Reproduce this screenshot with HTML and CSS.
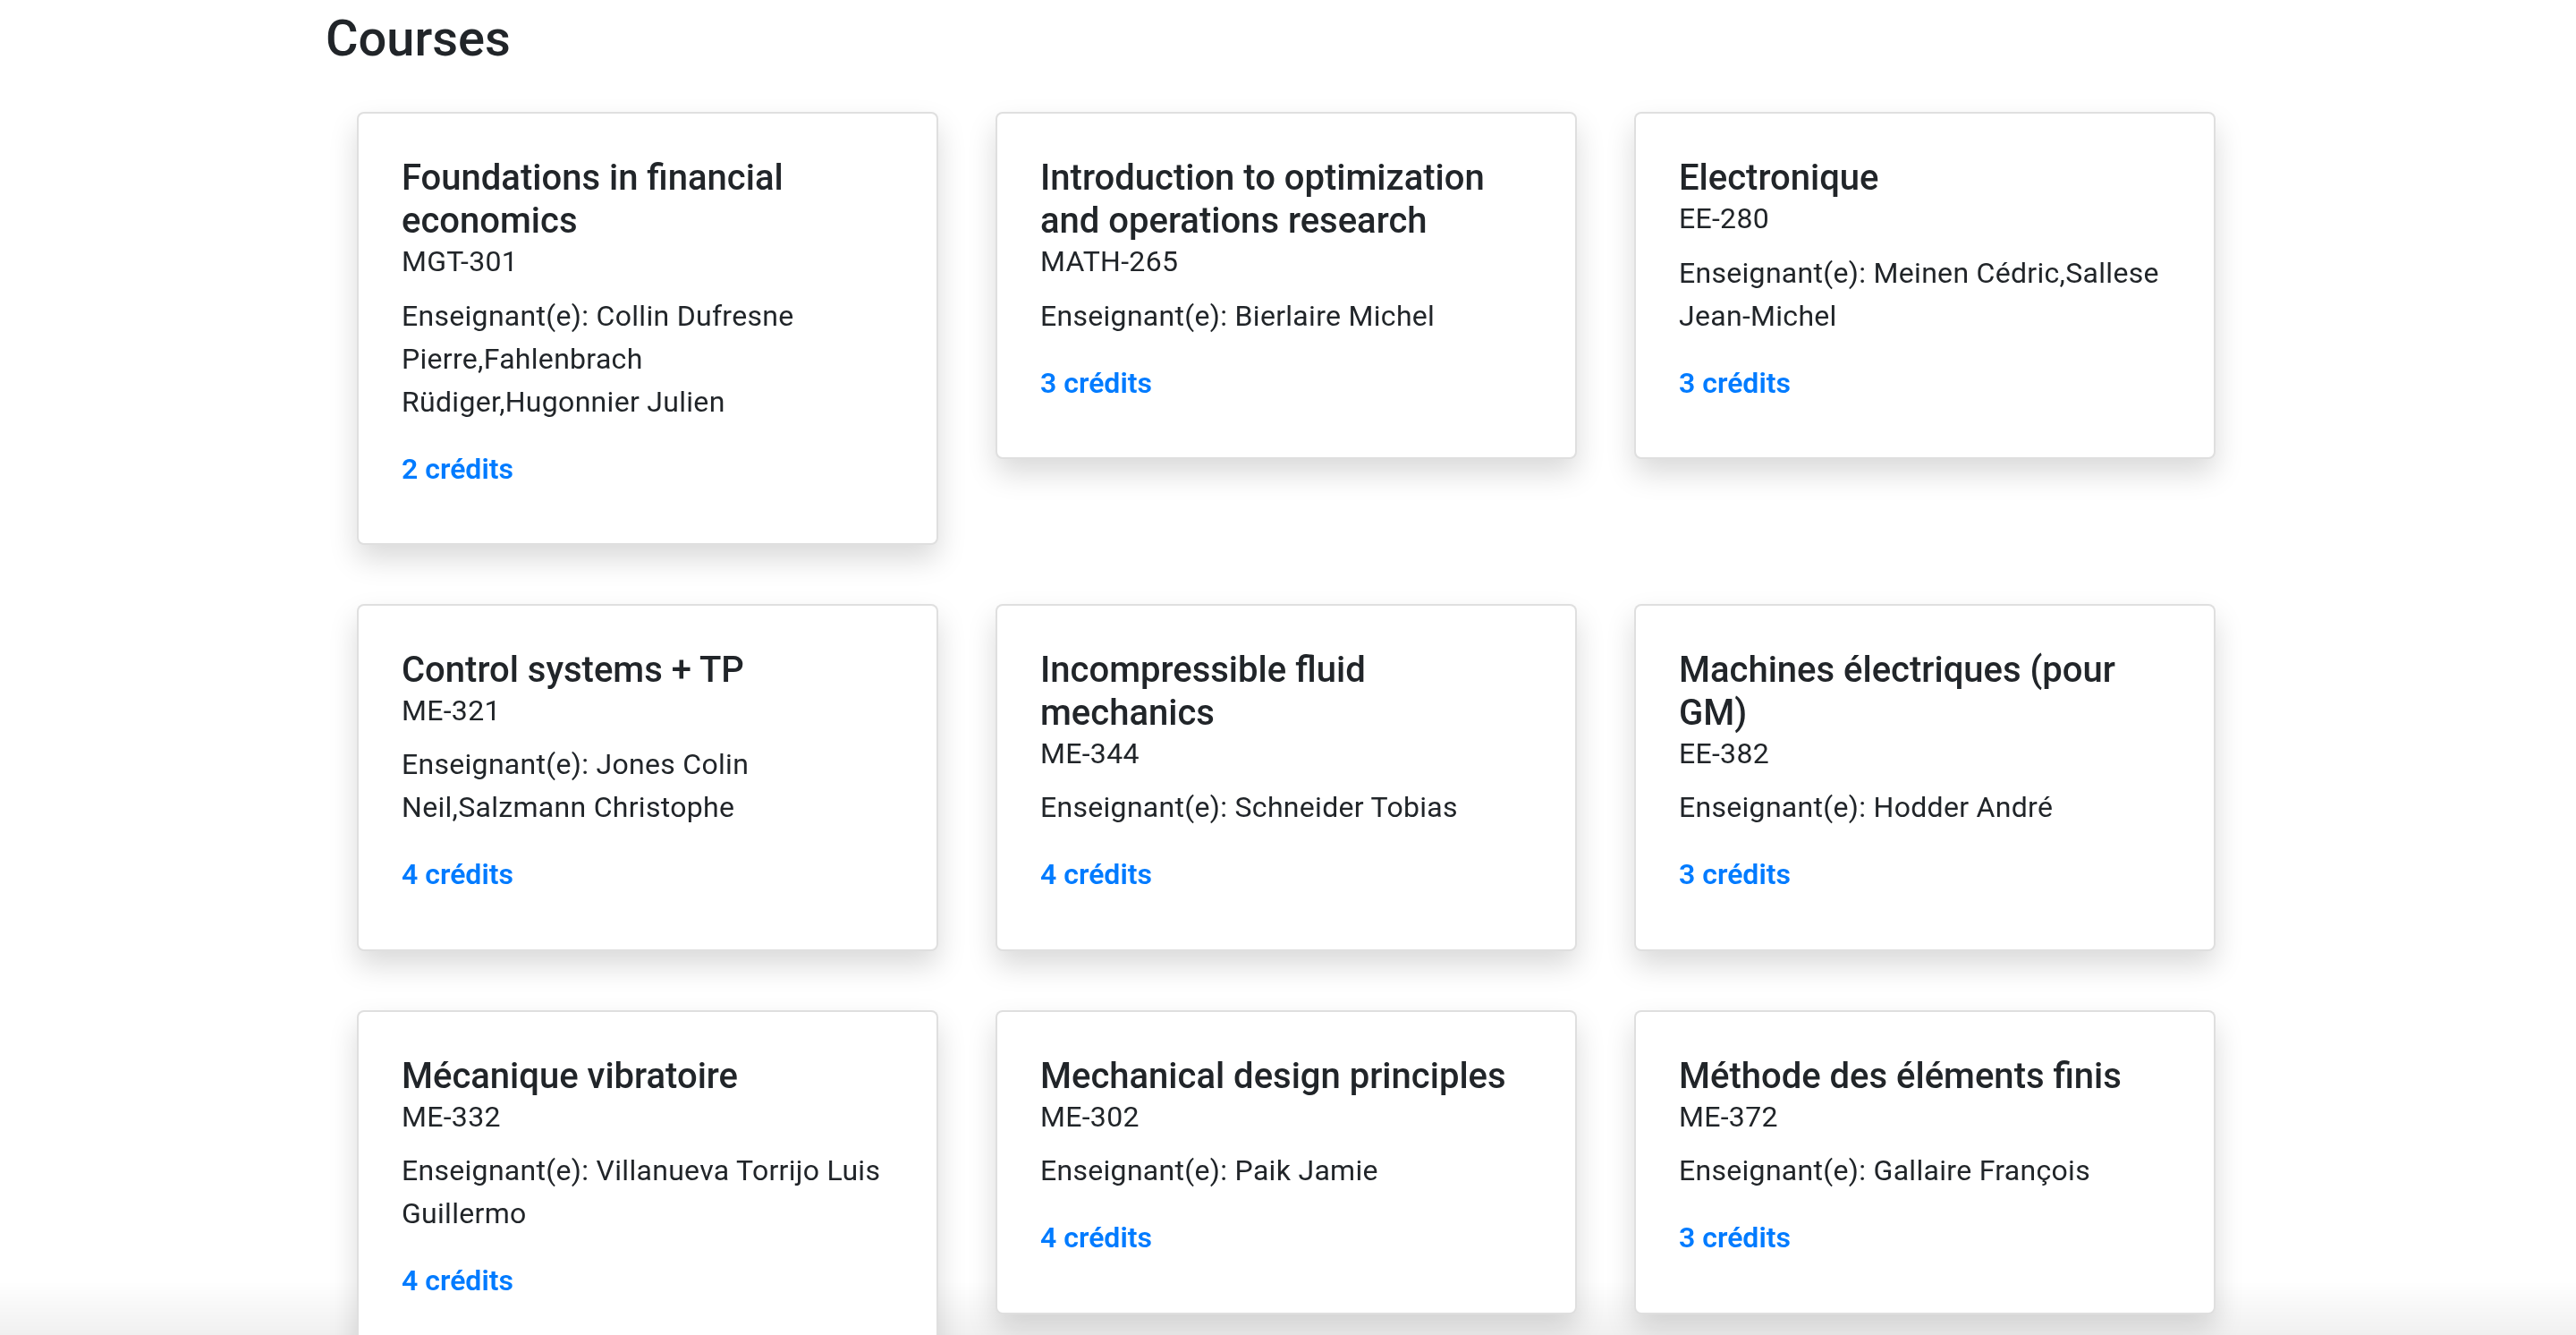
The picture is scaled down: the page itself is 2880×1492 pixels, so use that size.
FILE: index.html
```html
<!DOCTYPE html>
<html lang="fr">
<head>
<meta charset="utf-8">
<title>Courses</title>
<link rel="stylesheet" href="styles.css">
</head>
<body>
<div class="bottom-shade"></div>
<main class="page">
  <h3 class="page-title">Courses</h3>
  <div class="course-grid">
    <div class="card">
      <h5 class="card-title">Foundations in financial economics</h5>
      <h6 class="card-code">MGT-301</h6>
      <p class="card-teacher">Enseignant(e): Collin Dufresne Pierre,Fahlenbrach<br>Rüdiger,Hugonnier Julien</p>
      <h6 class="card-credits">2 crédits</h6>
    </div>
    <div class="card">
      <h5 class="card-title">Introduction to optimization and operations research</h5>
      <h6 class="card-code">MATH-265</h6>
      <p class="card-teacher">Enseignant(e): Bierlaire Michel</p>
      <h6 class="card-credits">3 crédits</h6>
    </div>
    <div class="card">
      <h5 class="card-title">Electronique</h5>
      <h6 class="card-code">EE-280</h6>
      <p class="card-teacher">Enseignant(e): Meinen Cédric,Sallese Jean-Michel</p>
      <h6 class="card-credits">3 crédits</h6>
    </div>
    <div class="card">
      <h5 class="card-title">Control systems + TP</h5>
      <h6 class="card-code">ME-321</h6>
      <p class="card-teacher">Enseignant(e): Jones Colin Neil,Salzmann Christophe</p>
      <h6 class="card-credits">4 crédits</h6>
    </div>
    <div class="card">
      <h5 class="card-title">Incompressible fluid mechanics</h5>
      <h6 class="card-code">ME-344</h6>
      <p class="card-teacher">Enseignant(e): Schneider Tobias</p>
      <h6 class="card-credits">4 crédits</h6>
    </div>
    <div class="card">
      <h5 class="card-title">Machines électriques (pour GM)</h5>
      <h6 class="card-code">EE-382</h6>
      <p class="card-teacher">Enseignant(e): Hodder André</p>
      <h6 class="card-credits">3 crédits</h6>
    </div>
    <div class="card">
      <h5 class="card-title">Mécanique vibratoire</h5>
      <h6 class="card-code">ME-332</h6>
      <p class="card-teacher">Enseignant(e): Villanueva Torrijo Luis Guillermo</p>
      <h6 class="card-credits">4 crédits</h6>
    </div>
    <div class="card">
      <h5 class="card-title">Mechanical design principles</h5>
      <h6 class="card-code">ME-302</h6>
      <p class="card-teacher">Enseignant(e): Paik Jamie</p>
      <h6 class="card-credits">4 crédits</h6>
    </div>
    <div class="card">
      <h5 class="card-title">Méthode des éléments finis</h5>
      <h6 class="card-code">ME-372</h6>
      <p class="card-teacher">Enseignant(e): Gallaire François</p>
      <h6 class="card-credits">3 crédits</h6>
    </div>
  </div>
</main>
</body>
</html>
```

FILE: styles.css
```css
* { box-sizing: border-box; }

html, body {
  margin: 0;
  padding: 0;
  background: #fff;
}

body {
  font-family: Roboto, "Noto Sans", "Liberation Sans", sans-serif;
  font-size: 32px;
  line-height: 1.5;
  color: #212529;
  position: relative;
}

.page {
  position: relative;
  z-index: 1;
  padding: 10px 0 200px 364px;
}

.page-title {
  margin: 0 0 48px 0;
  font-size: 56px;
  font-weight: 500;
  line-height: 1.2;
}

.course-grid {
  display: grid;
  grid-template-columns: repeat(3, 650px);
  column-gap: 64px;
  row-gap: 66px;
  align-items: start;
  padding-left: 35px;
}

.card {
  background: #fff;
  border: 2px solid rgba(0, 0, 0, 0.125);
  border-radius: 8px;
  padding: 48px;
  box-shadow: 0 16px 32px rgba(0, 0, 0, 0.15);
}

.card-title {
  margin: 0;
  font-size: 40px;
  font-weight: 500;
  line-height: 48px;
}

.card-code {
  margin: 2px 0 17px 0;
  font-size: 32px;
  font-weight: 400;
  line-height: 38.4px;
  letter-spacing: 0.3px;
}

.card-teacher {
  margin: 0 0 32px 0;
  font-size: 32px;
  line-height: 48px;
  letter-spacing: 0.3px;
}

.card-credits {
  margin: 0 0 16px 0;
  font-size: 32px;
  font-weight: 600;
  line-height: 38.4px;
  color: #007bff;
}

.bottom-shade {
  position: fixed;
  left: 0;
  right: 0;
  bottom: 0;
  height: 60px;
  background: linear-gradient(to bottom, rgba(0, 0, 0, 0), rgba(0, 0, 0, 0.06));
  z-index: 0;
}
```
